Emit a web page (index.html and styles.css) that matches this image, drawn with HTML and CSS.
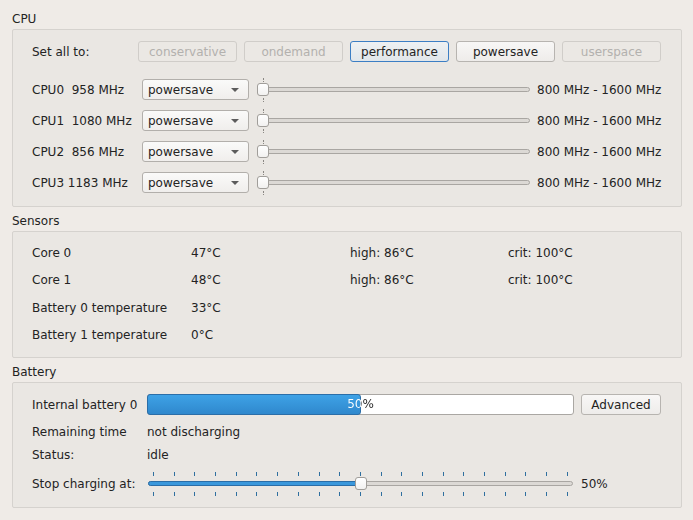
FILE: index.html
```html
<!DOCTYPE html>
<html>
<head>
<meta charset="utf-8">
<link rel="stylesheet" href="styles.css">
</head>
<body>
<div class="page">
  <div class="group group-first">
    <div class="group-title">CPU</div>
    <div class="panel cpu-panel">
      <div class="setall">
        <span class="setall-label">Set all to:</span>
        <div class="btns">
          <span class="btn disabled">conservative</span>
          <span class="btn disabled">ondemand</span>
          <span class="btn focus">performance</span>
          <span class="btn">powersave</span>
          <span class="btn disabled">userspace</span>
        </div>
      </div>
      <div class="cpu-rows">
        <span class="cpu-label">CPU0&nbsp; 958 MHz</span>
        <span class="combo">powersave<i class="arrow"></i></span>
        <div class="slider"><i class="tick tick-top"></i><i class="groove"></i><i class="handle"></i><i class="tick tick-bot"></i></div>
        <span class="range">800 MHz - 1600 MHz</span>

        <span class="cpu-label">CPU1&nbsp; 1080 MHz</span>
        <span class="combo">powersave<i class="arrow"></i></span>
        <div class="slider"><i class="tick tick-top"></i><i class="groove"></i><i class="handle"></i><i class="tick tick-bot"></i></div>
        <span class="range">800 MHz - 1600 MHz</span>

        <span class="cpu-label">CPU2&nbsp; 856 MHz</span>
        <span class="combo">powersave<i class="arrow"></i></span>
        <div class="slider"><i class="tick tick-top"></i><i class="groove"></i><i class="handle"></i><i class="tick tick-bot"></i></div>
        <span class="range">800 MHz - 1600 MHz</span>

        <span class="cpu-label">CPU3&nbsp;1183 MHz</span>
        <span class="combo">powersave<i class="arrow"></i></span>
        <div class="slider"><i class="tick tick-top"></i><i class="groove"></i><i class="handle"></i><i class="tick tick-bot"></i></div>
        <span class="range">800 MHz - 1600 MHz</span>
      </div>
    </div>
  </div>

  <div class="group">
    <div class="group-title">Sensors</div>
    <div class="panel sensors-panel">
      <span>Core 0</span><span>47°C</span><span>high: 86°C</span><span>crit: 100°C</span>
      <span>Core 1</span><span>48°C</span><span>high: 86°C</span><span>crit: 100°C</span>
      <span>Battery 0 temperature</span><span>33°C</span><span></span><span></span>
      <span>Battery 1 temperature</span><span>0°C</span><span></span><span></span>
    </div>
  </div>

  <div class="group">
    <div class="group-title">Battery</div>
    <div class="panel battery-panel">
      <span class="b-label">Internal battery 0</span>
      <div class="bar">
        <div class="bar-fill" style="width: 214px"></div>
        <span class="bar-text">50%</span>
      </div>
      <span class="btn adv">Advanced</span>

      <span class="b-label">Remaining time</span>
      <span class="b-value">not discharging</span>

      <span class="b-label">Status:</span>
      <span class="b-value">idle</span>

      <span class="b-label">Stop charging at:</span>
      <div class="bslider">
        <div class="ticks ticks-top">
          <i></i><i></i><i></i><i></i><i></i><i></i><i></i><i></i><i></i><i></i><i></i><i></i><i></i><i></i><i></i><i></i><i></i><i></i><i></i><i></i><i></i>
        </div>
        <div class="bgroove"><i class="bgroove-fill" style="width: 50%"></i><i class="bhandle" style="left: 50%"></i></div>
        <div class="ticks ticks-bot">
          <i></i><i></i><i></i><i></i><i></i><i></i><i></i><i></i><i></i><i></i><i></i><i></i><i></i><i></i><i></i><i></i><i></i><i></i><i></i><i></i><i></i>
        </div>
      </div>
      <span class="b-pct">50%</span>
    </div>
  </div>
</div>
</body>
</html>
```

FILE: styles.css
```css
html, body {
  margin: 0;
  padding: 0;
  background: #efebe7;
}
body {
  font-family: "DejaVu Sans", "Liberation Sans", sans-serif;
  font-size: 12px;
  color: #232323;
  width: 693px;
  height: 520px;
  overflow: hidden;
}
.page {
  padding: 0 11px 0 12px;
}
.group {
  margin-top: 7px;
}
.group-first {
  margin-top: 12px;
}
.group-title {
  line-height: 14px;
  height: 14px;
  margin-bottom: 3px;
}
.panel {
  background: #eae7e3;
  border: 1px solid #d5d2ce;
  border-radius: 2px;
}

/* CPU */
.cpu-panel {
  padding: 11px 20px 13px 19px;
}
.setall {
  display: flex;
  align-items: center;
  height: 21px;
  margin-bottom: 17px;
}
.setall-label {
  width: 106px;
  flex: none;
}
.btns {
  display: flex;
  gap: 7px;
}
.btn {
  box-sizing: border-box;
  display: flex;
  align-items: center;
  justify-content: center;
  width: 99px;
  height: 21px;
  border: 1px solid #b7b4b0;
  border-radius: 3px;
  background: linear-gradient(#f8f7f6, #eeecea);
  color: #232323;
}
.btn.disabled {
  color: #b3b1ae;
  border-color: #d0cdc9;
  background: #ebe8e4;
}
.btn.focus {
  border-color: #3c7ec4;
  background: linear-gradient(#eef1f3, #e1e6ea);
}
.cpu-rows {
  display: grid;
  grid-template-columns: 110px 107px 281px 1fr;
  row-gap: 10px;
  grid-auto-rows: 21px;
  align-items: center;
}
.cpu-label {
  white-space: nowrap;
}
.combo {
  position: relative;
  box-sizing: border-box;
  height: 21px;
  display: flex;
  align-items: center;
  padding-left: 5px;
  border: 1px solid #b2afab;
  border-radius: 3px;
  background: linear-gradient(#fafaf9, #f0eeec);
}
.arrow {
  position: absolute;
  right: 9px;
  top: 8px;
  width: 0;
  height: 0;
  border-left: 4px solid transparent;
  border-right: 4px solid transparent;
  border-top: 4px solid #5c5c5c;
}
.slider {
  position: relative;
  height: 21px;
  margin-left: 8px;
}
.groove {
  position: absolute;
  left: 0;
  right: 0;
  top: 8px;
  height: 3px;
  border: 1px solid #a9a6a2;
  border-radius: 3px;
  background: #dcd9d5;
}
.handle {
  position: absolute;
  left: 0;
  top: 4px;
  width: 10px;
  height: 11px;
  border: 1px solid #a19e9a;
  border-radius: 3px;
  background: linear-gradient(#ffffff, #f2f1f0);
}
.tick {
  position: absolute;
  left: 6px;
  width: 1px;
  height: 4px;
  background: repeating-linear-gradient(#8a8783 0 2px, transparent 2px 3px);
}
.tick-top {
  top: -1px;
}
.tick-bot {
  top: 19px;
}
.range {
  padding-left: 7px;
  white-space: nowrap;
}

/* Sensors */
.sensors-panel {
  display: grid;
  grid-template-columns: 159px 159px 158px 1fr;
  grid-auto-rows: 27.5px;
  align-items: center;
  padding: 7px 0 8px 19px;
}

/* Battery */
.battery-panel {
  display: grid;
  grid-template-columns: 115px 427px 1fr;
  grid-template-rows: 21px 15px 14px 26px;
  row-gap: 9px;
  align-items: center;
  padding: 11px 0 10px 19px;
}
.b-label {
  white-space: nowrap;
}
.b-value {
  grid-column: 2 / 4;
}
.bar {
  position: relative;
  box-sizing: border-box;
  height: 21px;
  border: 1px solid #aaa7a3;
  border-radius: 3px;
  background: #ffffff;
}
.bar-fill {
  position: absolute;
  left: -1px;
  top: -1px;
  bottom: -1px;
  box-sizing: border-box;
  border: 1px solid #2b6ea8;
  border-radius: 3px;
  background: linear-gradient(#3ea2e6, #2f88cd);
}
.bar-text {
  position: relative;
  display: block;
  width: 425px;
  height: 19px;
  line-height: 19px;
  text-align: center;
  color: transparent;
  background: linear-gradient(to right, #ffffff 0 213px, #232323 213px 100%);
  -webkit-background-clip: text;
  background-clip: text;
}
.btn.adv {
  width: 80px;
  margin-left: 7px;
}
.bslider {
  position: relative;
  height: 26px;
}
.ticks {
  position: absolute;
  left: 6px;
  right: 6px;
  height: 4px;
  display: flex;
  justify-content: space-between;
}
.ticks i {
  width: 1px;
  height: 4px;
  background: #2f6f9f;
}
.ticks-top {
  top: 1px;
}
.ticks-bot {
  top: 21px;
}
.bgroove {
  position: absolute;
  left: 1px;
  right: 1px;
  top: 10px;
  height: 3px;
  border: 1px solid #a9a6a2;
  border-radius: 3px;
  background: #dcd9d5;
}
.bgroove-fill {
  position: absolute;
  left: -1px;
  top: -1px;
  bottom: -1px;
  border: 1px solid #2b6ea8;
  border-radius: 3px;
  background: #3a98dc;
  box-sizing: border-box;
}
.bhandle {
  position: absolute;
  top: -5px;
  width: 10px;
  height: 11px;
  margin-left: -6px;
  border: 1px solid #a19e9a;
  border-radius: 3px;
  background: linear-gradient(#ffffff, #f2f1f0);
}
.b-pct {
  padding-left: 7px;
}
```
